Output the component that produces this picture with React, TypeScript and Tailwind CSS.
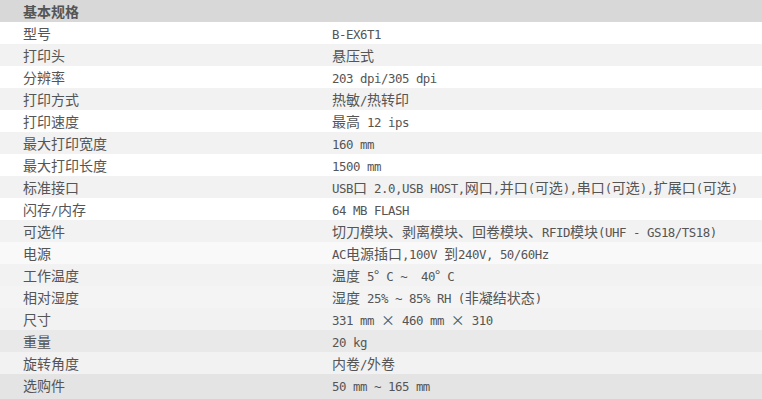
const specs: [string, string][] = [
  ['型号', 'B-EX6T1'],
  ['打印头', '悬压式'],
  ['分辨率', '203 dpi/305 dpi'],
  ['打印方式', '热敏/热转印'],
  ['打印速度', '最高 12 ips'],
  ['最大打印宽度', '160 mm'],
  ['最大打印长度', '1500 mm'],
  ['标准接口', 'USB口 2.0,USB HOST,网口,并口(可选),串口(可选),扩展口(可选)'],
  ['闪存/内存', '64 MB FLASH'],
  ['可选件', '切刀模块、剥离模块、回卷模块、RFID模块(UHF - GS18/TS18)'],
  ['电源', 'AC电源插口,100V 到240V, 50/60Hz'],
  ['工作温度', '温度 5° C ~  40° C'],
  ['相对湿度', '湿度 25% ~ 85% RH (非凝结状态)'],
  ['尺寸', '331 mm × 460 mm × 310'],
  ['重量', '20 kg'],
  ['旋转角度', '内卷/外卷'],
  ['选购件', '50 mm ~ 165 mm'],
];

// 행 배경색 (아래쪽으로 갈수록 조금씩 어두워짐)
const rowBg = [
  'bg-white',
  'bg-[#f2f2f2]',
  'bg-white',
  'bg-[#f2f2f2]',
  'bg-white',
  'bg-[#f2f2f2]',
  'bg-white',
  'bg-[#f2f2f2]',
  'bg-white',
  'bg-[#f2f2f2]',
  'bg-[#f9f9f9]',
  'bg-[#f2f2f2]',
  'bg-[#f4f4f4]',
  'bg-[#f2f2f2]',
  'bg-[#e9e9e9]',
  'bg-[#f2f2f2]',
  'bg-[#e4e4e4]',
];

const WIDE = /([\u2E80-\u9FFF\u3000-\u303F\uFF00-\uFFEF°×]+)/;

function MixedText({ text }: { text: string }) {
  const parts = text.split(WIDE).filter((p) => p !== '');
  return (
    <>
      {parts.map((part, i) =>
        WIDE.test(part) ? (
          <span key={i} className="font-['Noto_Sans_CJK_SC',sans-serif] text-[14px]">
            {part}
          </span>
        ) : (
          <span
            key={i}
            className="font-['DejaVu_Sans_Mono',monospace] text-[12.4px] tracking-[-0.47px]"
          >
            {part}
          </span>
        )
      )}
    </>
  );
}

export default function App() {
  return (
    <div className="w-[762px] h-[399px] bg-white text-[#555555] overflow-hidden">
      <div className="h-[22px] bg-[#d8d8d8] flex items-center pl-[23px]">
        <span className="font-['Noto_Sans_CJK_SC',sans-serif] text-[14px] font-bold leading-none">
          基本规格
        </span>
      </div>
      {specs.map(([label, value], index) => (
        <div
          key={label}
          className={`flex items-center ${rowBg[index]} ${
            index === specs.length - 1 ? 'h-[25px] pb-[3px]' : 'h-[22px]'
          }`}
        >
          <div className="w-[332px] pl-[23px] whitespace-pre leading-none">
            <MixedText text={label} />
          </div>
          <div className="flex-1 whitespace-pre leading-none">
            <MixedText text={value} />
          </div>
        </div>
      ))}
    </div>
  );
}
